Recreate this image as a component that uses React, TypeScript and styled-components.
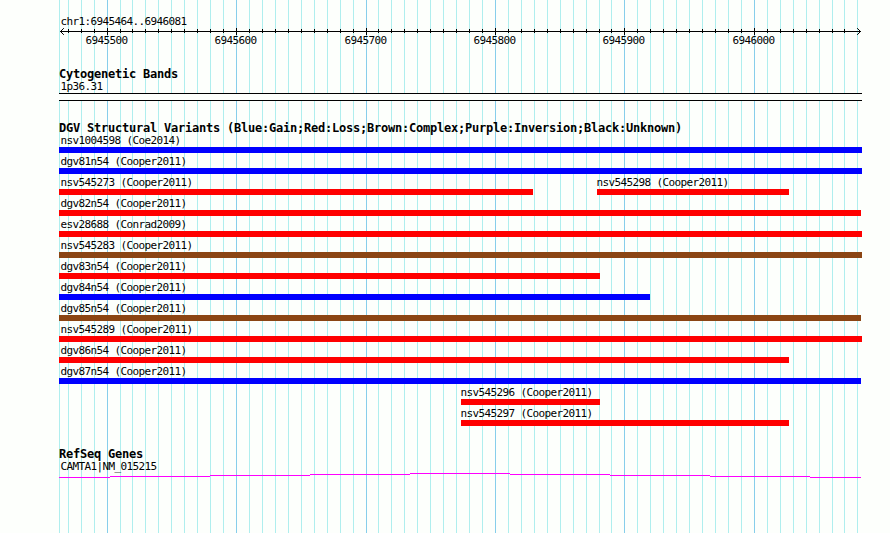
import React from "react";
import styled, { createGlobalStyle } from "styled-components";

const LEFT = 59;
const WIDTH = 803;
const HEIGHT = 533;

const colors = {
  gain: "#0000ff",
  loss: "#ff0000",
  complex: "#8b4513",
};

type Kind = keyof typeof colors;

interface Variant {
  name: string;
  start: number;
  end: number;
  kind: Kind;
}

// start and end are offsets from the left edge of the tracks
const rows: Variant[][] = [
  [{ name: "nsv1004598 (Coe2014)", start: 0, end: 803, kind: "gain" }],
  [{ name: "dgv81n54 (Cooper2011)", start: 0, end: 803, kind: "gain" }],
  [
    { name: "nsv545273 (Cooper2011)", start: 0, end: 474, kind: "loss" },
    { name: "nsv545298 (Cooper2011)", start: 538, end: 730, kind: "loss" },
  ],
  [{ name: "dgv82n54 (Cooper2011)", start: 0, end: 802, kind: "loss" }],
  [{ name: "esv28688 (Conrad2009)", start: 0, end: 803, kind: "loss" }],
  [{ name: "nsv545283 (Cooper2011)", start: 0, end: 803, kind: "complex" }],
  [{ name: "dgv83n54 (Cooper2011)", start: 0, end: 541, kind: "loss" }],
  [{ name: "dgv84n54 (Cooper2011)", start: 0, end: 591, kind: "gain" }],
  [{ name: "dgv85n54 (Cooper2011)", start: 0, end: 802, kind: "complex" }],
  [{ name: "nsv545289 (Cooper2011)", start: 0, end: 803, kind: "loss" }],
  [{ name: "dgv86n54 (Cooper2011)", start: 0, end: 730, kind: "loss" }],
  [{ name: "dgv87n54 (Cooper2011)", start: 0, end: 802, kind: "gain" }],
  [{ name: "nsv545296 (Cooper2011)", start: 402, end: 541, kind: "loss" }],
  [{ name: "nsv545297 (Cooper2011)", start: 402, end: 730, kind: "loss" }],
];

// one tick every 10 bases, the first one is 6945470
const ticks = Array.from({ length: 62 }, (_, i) => ({
  x: Math.floor(9.27 + 12.945 * i),
  position: 6945470 + i * 10,
}));

const isMajor = (position: number) => position % 100 === 0;

const geneSteps = [
  [0, 51, 4],
  [51, 151, 3],
  [151, 251, 2],
  [251, 351, 1],
  [351, 451, 0],
  [451, 551, 1],
  [551, 651, 2],
  [651, 751, 3],
  [751, 802, 4],
];

const Grid = () => (
  <GridLines width={WIDTH} height={HEIGHT}>
    <rect x={0} y={0} width={1} height={HEIGHT} fill="#afeeee" />
    {ticks.map(({ x, position }) => (
      <rect
        key={position}
        x={x}
        y={0}
        width={1}
        height={HEIGHT}
        fill={isMajor(position) ? "#87ceeb" : "#afeeee"}
      />
    ))}
  </GridLines>
);

const Ruler = () => (
  <RulerScale width={WIDTH} height={20}>
    <rect x={1} y={3} width={801} height={1} />
    <path d="M4.5 0.5L1.5 3.5L4.5 6.5M798.5 0.5L801.5 3.5L798.5 6.5" />
    {ticks.slice(0, -1).map(({ x, position }) =>
      isMajor(position) ? (
        <g key={position}>
          <rect x={x} y={0} width={1} height={7} />
          <text x={x - 21.5} y={16}>
            {position}
          </text>
        </g>
      ) : (
        <rect key={position} x={x} y={1} width={1} height={4} />
      )
    )}
  </RulerScale>
);

const App = () => {
  return (
    <>
      <GlobalStyle />
      <Browser>
        <Grid />
        <Tracks>
          <Label>chr1:6945464..6946081</Label>
          <Ruler />

          <Track $gap={19}>
            <Title>Cytogenetic Bands</Title>
            <Label>1p36.31</Label>
            <Band />
          </Track>

          <Track $gap={20}>
            <Title>
              DGV Structural Variants
              (Blue:Gain;Red:Loss;Brown:Complex;Purple:Inversion;Black:Unknown)
            </Title>
            <Rows>
              {rows.map((row) => (
                <Row key={row[0].name}>
                  {row.map((item, i) => (
                    <Feature
                      key={item.name}
                      $gap={item.start - (i ? row[i - 1].end : 0)}
                      $width={item.end - item.start}
                    >
                      <Label $shift={item.start ? -0.6 : 1.4}>{item.name}</Label>
                      <Bar $kind={item.kind} />
                    </Feature>
                  ))}
                </Row>
              ))}
            </Rows>
          </Track>

          <Track $gap={21}>
            <Title>RefSeq Genes</Title>
            <Label>CAMTA1|NM_015215</Label>
            <Gene width={WIDTH} height={5}>
              {geneSteps.map(([from, to, y]) => (
                <rect key={from} x={from} y={y} width={to - from} height={1} />
              ))}
            </Gene>
          </Track>
        </Tracks>
      </Browser>
    </>
  );
};

export default App;

const GlobalStyle = createGlobalStyle`
  body {
    margin: 0;
    background: #fdfffc;
    color: #000;
    font-family: "DejaVu Sans Mono", monospace;
  }
`;

const Browser = styled.main`
  position: relative;
  width: 890px;
  height: ${HEIGHT}px;
  overflow: hidden;
`;

const GridLines = styled.svg`
  position: absolute;
  top: 0;
  left: ${LEFT}px;
  shape-rendering: crispEdges;
`;

const Tracks = styled.div`
  position: relative;
  display: flex;
  flex-direction: column;
  width: ${WIDTH}px;
  padding: 15px 0 0 ${LEFT}px;
`;

const Track = styled.section<{ $gap: number }>`
  display: flex;
  flex-direction: column;
  margin-top: ${({ $gap }) => $gap}px;
`;

const Title = styled.h2`
  margin: 0;
  height: 13px;
  font-size: 12px;
  font-weight: 700;
  line-height: 14px;
  letter-spacing: -0.224px;
  white-space: nowrap;
`;

const Label = styled.div<{ $shift?: number }>`
  height: 13px;
  margin-left: ${({ $shift = 1.4 }) => $shift}px;
  font-size: 11px;
  line-height: 13px;
  letter-spacing: -0.622px;
  white-space: nowrap;
`;

const RulerScale = styled.svg`
  display: block;
  overflow: visible;
  rect {
    shape-rendering: crispEdges;
  }
  path {
    fill: none;
    stroke: #000;
    stroke-linecap: square;
  }
  text {
    font-size: 11px;
    letter-spacing: -0.622px;
  }
`;

const Band = styled.div`
  box-sizing: border-box;
  height: 8px;
  border: solid #000;
  border-width: 1px 0;
  background: #fdfffc;
`;

const Rows = styled.div`
  display: flex;
  flex-direction: column;
  gap: 2px;
`;

const Row = styled.div`
  display: flex;
`;

const Feature = styled.div<{ $gap: number; $width: number }>`
  flex: none;
  width: ${({ $width }) => $width}px;
  margin-left: ${({ $gap }) => $gap}px;
`;

const Bar = styled.div<{ $kind: Kind }>`
  height: 6px;
  background: ${({ $kind }) => colors[$kind]};
`;

const Gene = styled.svg`
  display: block;
  fill: #ff00ff;
  shape-rendering: crispEdges;
`;
